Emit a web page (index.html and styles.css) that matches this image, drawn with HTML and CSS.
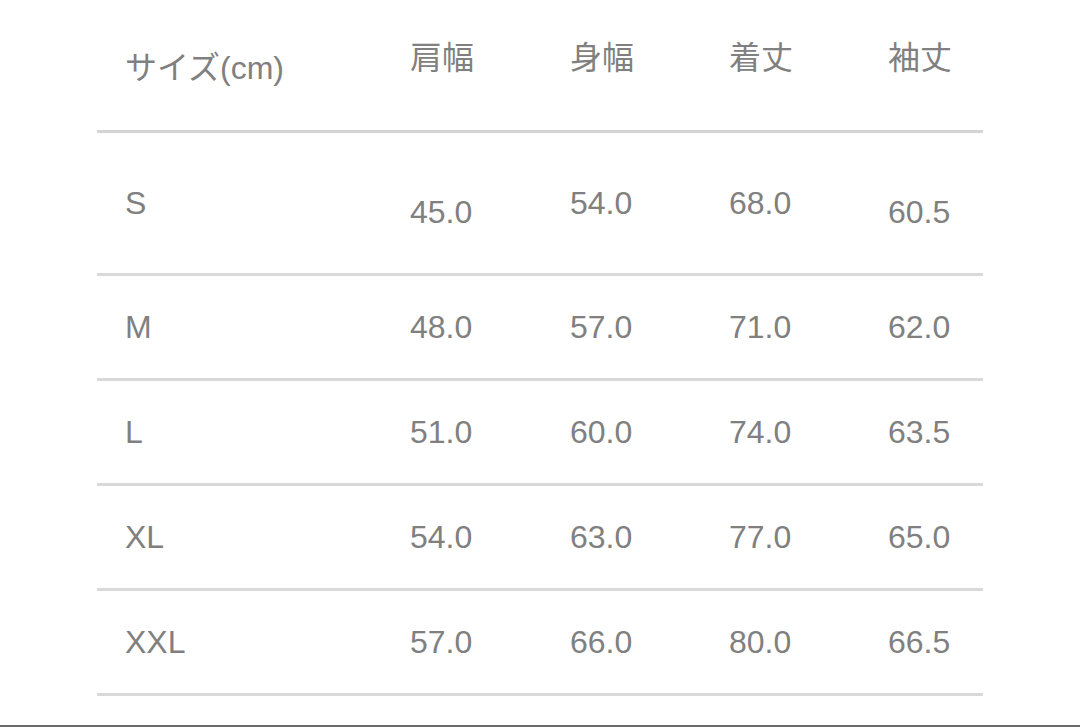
FILE: index.html
```html
<!DOCTYPE html>
<html lang="ja">
<head>
<meta charset="utf-8">
<title>サイズ表</title>
<link rel="stylesheet" href="styles.css">
</head>
<body>
<div class="page">
  <div class="table">
    <div class="row head">
      <div class="cell first size-label">サイズ(cm)</div>
      <div class="cell">肩幅</div>
      <div class="cell">身幅</div>
      <div class="cell">着丈</div>
      <div class="cell">袖丈</div>
    </div>
    <div class="row tall">
      <div class="cell first">S</div>
      <div class="cell low">45.0</div>
      <div class="cell">54.0</div>
      <div class="cell">68.0</div>
      <div class="cell low">60.5</div>
    </div>
    <div class="row">
      <div class="cell first">M</div>
      <div class="cell">48.0</div>
      <div class="cell">57.0</div>
      <div class="cell">71.0</div>
      <div class="cell">62.0</div>
    </div>
    <div class="row">
      <div class="cell first">L</div>
      <div class="cell">51.0</div>
      <div class="cell">60.0</div>
      <div class="cell">74.0</div>
      <div class="cell">63.5</div>
    </div>
    <div class="row">
      <div class="cell first">XL</div>
      <div class="cell">54.0</div>
      <div class="cell">63.0</div>
      <div class="cell">77.0</div>
      <div class="cell">65.0</div>
    </div>
    <div class="row">
      <div class="cell first">XXL</div>
      <div class="cell">57.0</div>
      <div class="cell">66.0</div>
      <div class="cell">80.0</div>
      <div class="cell">66.5</div>
    </div>
  </div>
  <div class="bottom-bar"></div>
</div>
</body>
</html>
```

FILE: styles.css
```css
html, body {
  margin: 0;
  padding: 0;
  background: #ffffff;
}

.page {
  width: 1080px;
  height: 727px;
  display: flex;
  flex-direction: column;
  overflow: hidden;
}

.table {
  margin-left: 97px;
  width: 886px;
  flex: 1;
  font-family: "Liberation Sans", "Noto Sans CJK JP", sans-serif;
  font-size: 32px;
  color: #808080;
}

.row {
  display: grid;
  grid-template-columns: 285px 160px 159px 159px 1fr;
  padding-left: 28px;
  height: 102px;
  align-items: center;
  border-bottom: 3px solid #d9d9d9;
}

.row.head {
  height: 130px;
  align-items: start;
  border-bottom-color: #d4d4d4;
}

.row.head .cell {
  padding-top: 40px;
  line-height: 36px;
}

.row.head .size-label {
  padding-top: 50px;
}

.row.tall {
  height: 140px;
}

.cell {
  line-height: 1;
  white-space: nowrap;
}

.cell.low {
  padding-top: 18px;
}

.bottom-bar {
  height: 2px;
  background: #6a6a6a;
}
```
